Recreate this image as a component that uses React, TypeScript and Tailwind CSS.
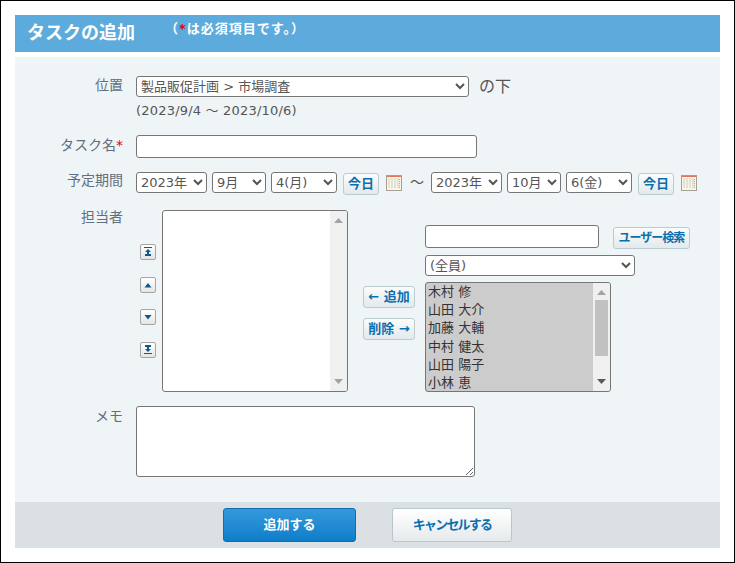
import React from 'react'

const members = ['木村 修', '山田 大介', '加藤 大輔', '中村 健太', '山田 陽子', '小林 恵']

const selectCls =
	'h-[21px] rounded-[3px] border border-[#767676] bg-white text-[13px] text-[#555]'
const inputCls = 'rounded-[3px] border border-[#767676] bg-white'
const blueBtn =
	'flex items-center justify-center rounded-[3px] border border-[#bccbd0] bg-gradient-to-b from-[#fbfcfc] to-[#e3e9ec] font-bold text-[#0b6fae]'

const Label = ({ children, className = '' }: { children: React.ReactNode; className?: string }) => (
	<div className={`w-[108px] shrink-0 text-right text-[14px] leading-[20px] text-[#5f6f7f] ${className}`}>
		{children}
	</div>
)

const CalendarIcon = () => (
	<svg width="16" height="16" viewBox="0 0 16 16" className="block shrink-0">
		<rect x="0" y="0" width="16" height="16" fill="#a79f90" />
		<rect x="1" y="1" width="14" height="14" fill="#f7f5ec" />
		<rect x="1" y="1" width="14" height="1" fill="#e2765a" />
		<path
			d="M2 4h12M2 6h12M2 8h12M2 10h12M2 12h12"
			stroke="#d2cebb"
			strokeWidth="1"
			strokeDasharray="2 1"
		/>
		<path d="M13.5 4v9" stroke="#eb9a78" strokeWidth="1" strokeDasharray="1 1" />
	</svg>
)

const DateSelects = ({ month, day }: { month: string; day: string }) => (
	<>
		<select className={`${selectCls} w-[71px]`}>
			<option>2023年</option>
		</select>
		<select className={`${selectCls} ml-[5px] w-[54px]`}>
			<option>{month}</option>
		</select>
		<select className={`${selectCls} ml-[5px] w-[66px]`}>
			<option>{day}</option>
		</select>
		<button type="button" className={`${blueBtn} ml-[6px] mt-[1px] h-[22px] w-[36px] text-[13px]`}>
			今日
		</button>
		<span className="ml-[7px] mt-[3px]">
			<CalendarIcon />
		</span>
	</>
)

const ScrollArrow = ({ down, fill }: { down?: boolean; fill: string }) => (
	<svg width="9" height="5" viewBox="0 0 9 5" className="block">
		<path d={down ? 'M0 0h9L4.5 5z' : 'M4.5 0L9 5H0z'} fill={fill} />
	</svg>
)

const OrderButton = ({ d, className = '' }: { d: string; className?: string }) => (
	<button
		type="button"
		className={`flex h-[16px] w-[16px] items-center justify-center rounded-[2px] border border-[#a5a5a5] bg-gradient-to-b from-white to-[#e4e4e4] ${className}`}>
		<svg width="10" height="10" viewBox="0 0 10 10" className="block">
			<path d={d} fill="#0a5a8c" />
		</svg>
	</button>
)

const App = () => {
	return (
		<div
			className="flex h-[563px] w-[735px] flex-col border border-black bg-white p-[14px] text-[#555]"
			style={{ fontFamily: '"DejaVu Sans", "Noto Sans CJK JP", sans-serif' }}>
			{/* header */}
			<div className="flex h-[37px] shrink-0 items-start bg-[#5dabdc] pl-[12px] text-white">
				<h1 className="mt-[6px] text-[18px] font-bold leading-[24px]">タスクの追加</h1>
				<p className="ml-[30px] mt-[6px] text-[13px] font-bold leading-[16px] tracking-[1px]">
					（<span className="text-[#e60012]">*</span>は必須項目です。）
				</p>
			</div>

			{/* form */}
			<div className="mt-[5px] flex h-[445px] shrink-0 flex-col bg-[#eff4f7] pt-[19px]">
				<div className="flex">
					<Label className="-mt-[1px]">位置</Label>
					<div className="ml-[13px]">
						<div className="flex h-[21px] items-center">
							<select className={`${selectCls} w-[333px]`}>
								<option>製品販促計画 &gt; 市場調査</option>
							</select>
							<span className="ml-[10px] text-[16px] leading-[21px]">の下</span>
						</div>
						<p className="mt-[5px] text-[13px] leading-[18px] tracking-[0.2px]">(2023/9/4 ～ 2023/10/6)</p>
					</div>
				</div>

				<div className="mt-[15px] flex">
					<Label>
						タスク名<span className="text-[#e60012]">*</span>
					</Label>
					<input type="text" className={`${inputCls} ml-[13px] h-[23px] w-[341px]`} />
				</div>

				<div className="mt-[14px] flex">
					<Label className="-mt-[2px]">予定期間</Label>
					<div className="ml-[13px] flex items-start">
						<DateSelects month="9月" day="4(月)" />
						<span className="ml-[8px] w-[15px] text-[14px] leading-[21px]">～</span>
						<span className="ml-[6px] flex items-start">
							<DateSelects month="10月" day="6(金)" />
						</span>
					</div>
				</div>

				<div className="mt-[15px] flex h-[182px]">
					<Label className="-mt-[3px]">担当者</Label>
					<div className="ml-[17px] flex w-[16px] flex-col pt-[34px]">
						<OrderButton d="M1 0h8v1H1zM5 2l3 3H6v2h2v2H2V7h2V5H2z" />
						<OrderButton d="M5 3l3.5 4.5h-7z" className="mt-[17px]" />
						<OrderButton d="M1.5 3h7L5 7.5z" className="mt-[16px]" />
						<OrderButton d="M2 0h6v2H6v2h2L5 7 2 4h2V2H2zM1 8h8v1H1z" className="mt-[17px]" />
					</div>

					<div className="ml-[6px] flex h-[182px] w-[186px] overflow-hidden rounded-[3px] border border-[#767676] bg-white">
						<div className="flex-1" />
						<div className="flex w-[17px] flex-col items-center justify-between bg-[#f0f0f0] py-[7px]">
							<ScrollArrow fill="#a3a3a3" />
							<ScrollArrow down fill="#a3a3a3" />
						</div>
					</div>

					<div className="ml-[15px] flex w-[52px] flex-col gap-[10px] pt-[76px]">
						<button type="button" className={`${blueBtn} h-[22px] text-[13px]`}>
							← 追加
						</button>
						<button type="button" className={`${blueBtn} h-[22px] text-[13px]`}>
							削除 →
						</button>
					</div>

					<div className="ml-[10px] flex flex-col pt-[15px]">
						<div className="flex h-[23px] items-start">
							<input type="text" className={`${inputCls} h-[23px] w-[174px]`} />
							<button
								type="button"
								className={`${blueBtn} ml-[14px] mt-[2px] h-[22px] w-[77px] text-[12px] tracking-[-1px]`}>
								ユーザー検索
							</button>
						</div>
						<select className={`${selectCls} mt-[7px] block w-[210px]`}>
							<option>(全員)</option>
						</select>
						<div className="mt-[6px] flex h-[110px] w-[186px] overflow-hidden rounded-[3px] border border-[#767676] bg-[#cccccc]">
							<ul className="flex-1 pl-[2px] text-[13px] leading-[18.2px] text-[#333]">
								{members.map((name, i) => (
									<li key={i} className="whitespace-nowrap">
										{name}
									</li>
								))}
							</ul>
							<div className="flex w-[17px] flex-col items-center bg-[#f0f0f0] py-[7px]">
								<ScrollArrow fill="#a3a3a3" />
								<div className="mt-[5px] h-[56px] w-[13px] bg-[#c1c1c1]" />
								<div className="mt-auto">
									<ScrollArrow down fill="#5a5a5a" />
								</div>
							</div>
						</div>
					</div>
				</div>

				<div className="mt-[14px] flex">
					<Label>メモ</Label>
					<textarea className={`${inputCls} ml-[13px] block h-[71px] w-[339px]`} />
				</div>
			</div>

			{/* footer buttons */}
			<div className="flex h-[46px] shrink-0 justify-center gap-[36px] bg-[#dbe0e4] pt-[6px]">
				<button
					type="button"
					className="h-[34px] w-[133px] rounded-[3px] border border-[#0f6eaf] bg-gradient-to-b from-[#3399db] to-[#0c7ec9] text-[13px] font-bold text-white">
					追加する
				</button>
				<button
					type="button"
					className="h-[34px] w-[120px] rounded-[3px] border border-[#b9c6ca] bg-gradient-to-b from-white to-[#e6eaec] text-[13px] font-bold tracking-[-1.8px] text-[#0b6fae]">
					キャンセルする
				</button>
			</div>
		</div>
	)
}

export default App
